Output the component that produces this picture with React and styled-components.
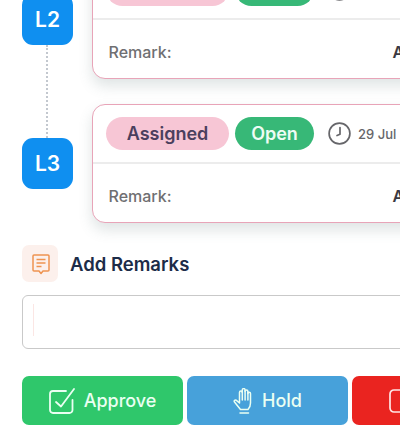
import styled, { createGlobalStyle } from 'styled-components';

const GlobalStyle = createGlobalStyle`
  html, body {
    margin: 0;
    padding: 0;
    background: #fff;
    font-family: "Inter", "Noto Sans", sans-serif;
  }
`;

const Viewport = styled.div`
  width: 400px;
  height: 442px;
  overflow: hidden;
`;

const Content = styled.div`
  width: 460px;
  margin-top: -40px;
  padding-left: 22px;
  box-sizing: border-box;
`;

const Timeline = styled.div`
  display: flex;
  flex-direction: column;
  gap: 25px;
`;

const Level = styled.div`
  display: flex;
  align-items: center;
  gap: 19px;
`;

const Badge = styled.div`
  position: relative;
  flex: none;
  width: 51px;
  height: 51px;
  border-radius: 11px;
  background: #0f8ff0;
  color: #fff;
  font-size: 21px;
  font-weight: 600;
  display: flex;
  align-items: center;
  justify-content: center;

  ${(p) => p.$connected && `
    &::after {
      content: "";
      position: absolute;
      left: 24px;
      top: 51px;
      height: 93px;
      border-left: 2px dotted #c3c8cf;
    }
  `}
`;

const Card = styled.div`
  width: 345px;
  height: 119px;
  box-sizing: border-box;
  border: 1.5px solid #e8a4b8;
  border-radius: 13px;
  background: #fff;
  box-shadow: 0 7px 14px rgba(80, 105, 105, 0.18);
  display: flex;
  flex-direction: column;
`;

const CardHead = styled.div`
  display: flex;
  align-items: center;
  height: 57px;
  padding: 0 13px;
  border-bottom: 2px solid #ececec;
`;

const Pill = styled.span`
  height: 33px;
  display: inline-flex;
  align-items: center;
  justify-content: center;
  border-radius: 17px;
  font-size: 18px;
  font-weight: 600;
  width: ${(p) => p.$width}px;
  margin-right: 6px;
  color: ${(p) => p.$color};
  background: ${(p) => p.$bg};
`;

const DateBox = styled.span`
  display: inline-flex;
  align-items: center;
  gap: 7px;
  margin-left: 8px;
  color: #66666a;
  font-size: 13px;
  font-weight: 500;
  white-space: nowrap;
`;

const CardBody = styled.div`
  flex: 1;
  display: flex;
  align-items: center;
  padding: 5px 0 0 15.5px;
  font-size: 16px;
`;

const RemarkLabel = styled.span`
  width: 284px;
  color: #6f6f72;
  font-weight: 500;
`;

const RemarkValue = styled.span`
  color: #3a3a42;
  font-weight: 600;
`;

const RemarksHeader = styled.div`
  display: flex;
  align-items: center;
  gap: 12px;
  margin-top: 22px;
`;

const IconBox = styled.div`
  width: 36px;
  height: 37px;
  border-radius: 7px;
  background: #fcf0ec;
  display: flex;
  align-items: center;
  justify-content: center;
  padding-left: 2px;
  box-sizing: border-box;
`;

const RemarksTitle = styled.span`
  color: #1c2c48;
  font-size: 18.5px;
  font-weight: 600;
`;

const RemarksInput = styled.div`
  width: 420px;
  height: 54px;
  margin-top: 13px;
  box-sizing: border-box;
  border: 1px solid #c9c9c9;
  border-radius: 6px;
  padding: 8px 10px;
`;

const Caret = styled.div`
  width: 1px;
  height: 32px;
  background: #fbe6e4;
`;

const Actions = styled.div`
  display: flex;
  gap: 4px;
  margin-top: 27px;
`;

const ActionButton = styled.div`
  flex: none;
  width: 161px;
  height: 49px;
  border-radius: 7px;
  background: ${(p) => p.$bg};
  color: #eafff2;
  font-size: 18px;
  font-weight: 500;
  display: flex;
  align-items: center;
  justify-content: center;
  gap: 9px;
`;

function ClockIcon() {
  return (
    <svg width="23" height="23" viewBox="0 0 23 23" fill="none" stroke="#66666a" strokeWidth="1.7">
      <circle cx="11.5" cy="11.5" r="10.4" />
      <path d="M12 5.5v6.8l-3 1.2" strokeLinecap="round" strokeLinejoin="round" />
    </svg>
  );
}

function NoteIcon() {
  return (
    <svg width="20" height="22" viewBox="0 0 20 22" fill="none" stroke="#ee9350" strokeWidth="1.5">
      <path d="M3 2h14a1 1 0 0 1 1 1v14a1 1 0 0 1-1 1h-5l-2 2.5L8 18H3a1 1 0 0 1-1-1V3a1 1 0 0 1 1-1z" strokeLinejoin="round" />
      <path d="M5.5 6.5h9M5.5 10h9M5.5 13.5h5" />
    </svg>
  );
}

function ApproveIcon() {
  return (
    <svg width="26" height="26" viewBox="0 0 26 26" fill="none" stroke="#eafff2" strokeWidth="1.8" strokeLinecap="round" strokeLinejoin="round">
      <path d="M23.5 12v10a3 3 0 0 1-3 3H4a3 3 0 0 1-3-3V6a3 3 0 0 1 3-3h13" />
      <path d="M7 14l5 4.5L25 1" />
    </svg>
  );
}

function HoldIcon() {
  return (
    <svg width="20" height="26" viewBox="0 0 20 26" fill="none" stroke="#eafff2" strokeWidth="1.5" strokeLinecap="round" strokeLinejoin="round">
      <path d="M6.5 15V4.5a1.4 1.4 0 0 1 2.8 0V2a1.4 1.4 0 0 1 2.8 0v1.5a1.4 1.4 0 0 1 2.8 0v2a1.3 1.3 0 0 1 2.6 0V15c0 3-1 5-2.5 6.5H7.5L1.5 14c-.8-1 .3-2.4 1.6-1.8L6.5 15z" />
      <path d="M9.3 4v8M12.1 2.5V12M14.9 4v8M7 25h8.5" />
    </svg>
  );
}

function RejectIcon() {
  return (
    <svg width="24" height="26" viewBox="0 0 24 26" fill="none" stroke="#ffe6e6" strokeWidth="1.7">
      <rect x="1" y="2" width="22" height="22" rx="4" />
    </svg>
  );
}

function LevelRow({ label, connected, title }) {
  return (
    <Level>
      <Badge $connected={connected}>{label}</Badge>
      <Card>
        <CardHead>
          <Pill $width={123} $bg="#f7c6d5" $color="#4b3f5e">{title}</Pill>
          <Pill $width={79} $bg="#37b877" $color="#eefcf4">Open</Pill>
          <DateBox><ClockIcon />29 Jul</DateBox>
        </CardHead>
        <CardBody>
          <RemarkLabel>Remark:</RemarkLabel>
          <RemarkValue>A</RemarkValue>
        </CardBody>
      </Card>
    </Level>
  );
}

export default function App() {
  return (
    <>
      <GlobalStyle />
      <Viewport>
        <Content>
          <Timeline>
            <LevelRow label="L2" title="Assigned" connected />
            <LevelRow label="L3" title="Assigned" />
          </Timeline>
          <RemarksHeader>
            <IconBox><NoteIcon /></IconBox>
            <RemarksTitle>Add Remarks</RemarksTitle>
          </RemarksHeader>
          <RemarksInput><Caret /></RemarksInput>
          <Actions>
            <ActionButton $bg="#2fc76b"><ApproveIcon />Approve</ActionButton>
            <ActionButton $bg="#47a1da"><HoldIcon />Hold</ActionButton>
            <ActionButton $bg="#ea2420"><RejectIcon />Reject</ActionButton>
          </Actions>
        </Content>
      </Viewport>
    </>
  );
}
